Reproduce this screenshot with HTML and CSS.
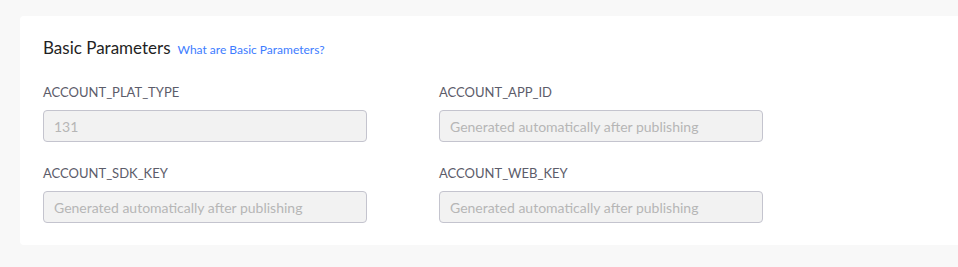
FILE: index.html
```html
<!DOCTYPE html>
<html lang="en">
<head>
  <meta charset="UTF-8">
  <meta name="viewport" content="width=device-width, initial-scale=1.0">
  <title>Basic Parameters</title>
  <link rel="stylesheet" href="styles.css">
</head>
<body>
  <div class="page">
    <div class="card">
      <div class="card-header">
        <h2 class="title">Basic Parameters</h2>
        <a href="#" class="help-link">What are Basic Parameters?</a>
      </div>

      <div class="param-grid">
        <div class="field">
          <label class="label">ACCOUNT_PLAT_TYPE</label>
          <input type="text" class="input" placeholder="131" disabled>
        </div>
        <div class="field">
          <label class="label">ACCOUNT_APP_ID</label>
          <input type="text" class="input" placeholder="Generated automatically after publishing" disabled>
        </div>
        <div class="field">
          <label class="label">ACCOUNT_SDK_KEY</label>
          <input type="text" class="input" placeholder="Generated automatically after publishing" disabled>
        </div>
        <div class="field">
          <label class="label">ACCOUNT_WEB_KEY</label>
          <input type="text" class="input" placeholder="Generated automatically after publishing" disabled>
        </div>
      </div>
    </div>
  </div>
</body>
</html>
```

FILE: styles.css
```css
* {
  margin: 0;
  padding: 0;
  box-sizing: border-box;
}

body {
  background: #f8f8f8;
  font-family: Lato, "Open Sans", sans-serif;
}

.page {
  padding: 16px 0 0 20px;
}

.card {
  background: white;
  border-radius: 4px 0 0 4px;
  padding: 20px 23px 22px;
  height: 229px;
}

.card-header {
  display: flex;
  align-items: baseline;
  gap: 7px;
  height: 26px;
}

.title {
  font-size: 17px;
  font-weight: 400;
  color: #1f1f24;
  line-height: 24px;
}

.help-link {
  font-size: 12px;
  color: #3d7cff;
  text-decoration: none;
}

.param-grid {
  display: grid;
  grid-template-columns: 324px 324px;
  column-gap: 72px;
  row-gap: 21px;
  margin-top: 20px;
}

.field {
  display: flex;
  flex-direction: column;
}

.label {
  font-size: 13px;
  color: #5c5c6a;
  line-height: 20px;
  margin-bottom: 8px;
}

.input {
  height: 32px;
  padding: 0 10px;
  border: 1px solid #c4c4ce;
  border-radius: 4px;
  background: #f2f2f2;
  font-family: inherit;
  font-size: 14px;
  color: #333;
}

.input::placeholder {
  color: #b6b6b6;
}
```
